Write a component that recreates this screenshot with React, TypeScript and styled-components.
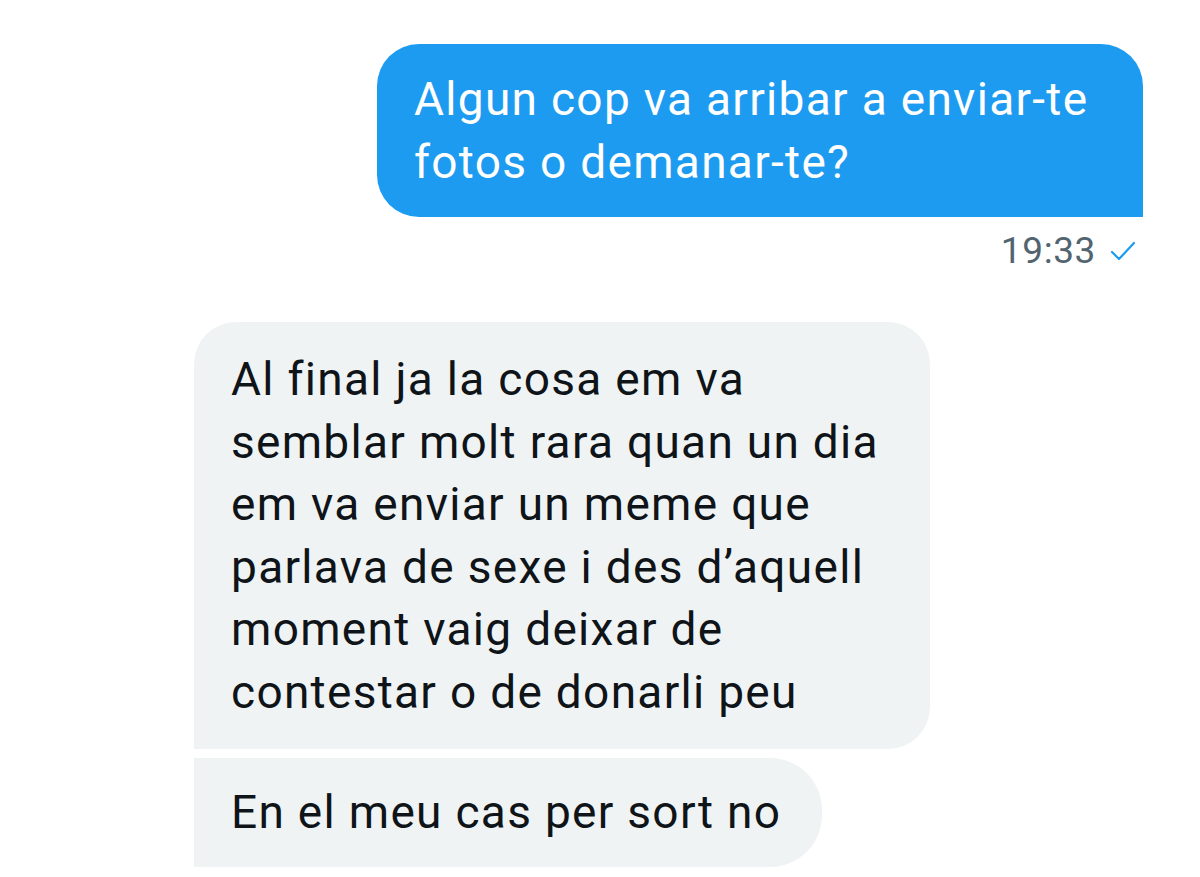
import React from "react";
import styled, { createGlobalStyle } from "styled-components";

const Global = createGlobalStyle`
  html, body { margin: 0; padding: 0; background: #ffffff; }
  body { font-family: Roboto, "Liberation Sans", sans-serif; }
`;

const Thread = styled.div`
  width: 1200px;
  height: 877px;
  box-sizing: border-box;
  padding: 44px 57px 0 194px;
  display: flex;
  flex-direction: column;
  overflow: hidden;
`;

const OutGroup = styled.div`
  display: flex;
  flex-direction: column;
  align-items: flex-end;
`;

const InGroup = styled.div`
  display: flex;
  flex-direction: column;
  align-items: flex-start;
  gap: 9px;
  margin-top: 51px;
`;

const Bubble = styled.div<{ $out?: boolean; $w: number; $radius: string; $py: number }>`
  box-sizing: border-box;
  width: ${(p) => p.$w}px;
  padding: ${(p) => p.$py}px 37px ${(p) => p.$py}px 37px;
  background: ${(p) => (p.$out ? "#1d9bf0" : "#eff3f4")};
  color: ${(p) => (p.$out ? "#ffffff" : "#0f1419")};
  border-radius: ${(p) => p.$radius};
  font-size: 46px;
  line-height: 62.5px;
  letter-spacing: 1.3px;
`;

const Meta = styled.div`
  display: flex;
  align-items: center;
  gap: 14px;
  margin-top: 14px;
  margin-right: 7px;
  font-size: 37px;
  line-height: 40px;
  letter-spacing: 0.6px;
  color: #536471;
`;

const Check = () => (
  <svg width="26" height="22" viewBox="0 0 26 22" fill="none">
    <polyline points="2,12 9,19 24,3" stroke="#1d9bf0" strokeWidth="2.2" strokeLinecap="round" strokeLinejoin="round" />
  </svg>
);

export default function App() {
  return (
    <>
      <Global />
      <Thread>
        <OutGroup>
          <Bubble $out $w={766} $py={24} $radius="42px 42px 0 42px">
            Algun cop va arribar a enviar-te fotos o demanar-te?
          </Bubble>
          <Meta>
            <span>19:33</span>
            <Check />
          </Meta>
        </OutGroup>
        <InGroup>
          <Bubble $w={736} $py={26} $radius="42px 42px 42px 0">
            Al final ja la cosa em va semblar molt rara quan un dia em va enviar un meme que parlava de sexe i des d’aquell moment vaig deixar de contestar o de donarli peu
          </Bubble>
          <Bubble $w={628} $py={23} $radius="0 52px 52px 0">
            En el meu cas per sort no
          </Bubble>
        </InGroup>
      </Thread>
    </>
  );
}
